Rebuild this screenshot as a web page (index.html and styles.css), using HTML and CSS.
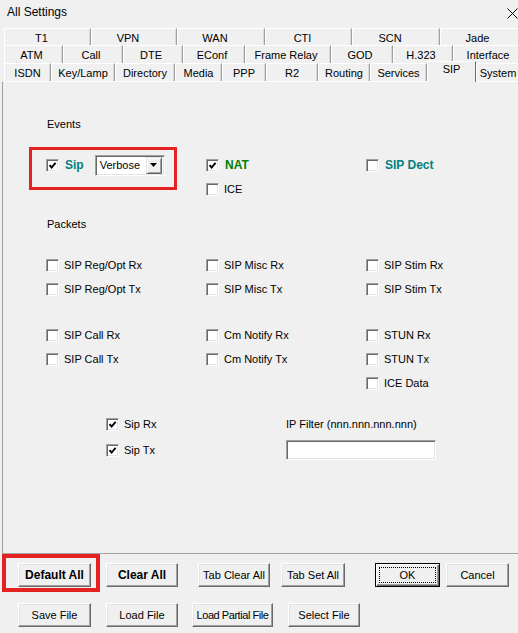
FILE: index.html
```html
<!DOCTYPE html>
<html lang="en">
<head>
    <meta charset="UTF-8">
    <meta name="viewport" content="width=device-width, initial-scale=1.0">
    <title>All Settings</title>
    <link rel="stylesheet" href="styles.css">
</head>
<body>
    <div class="window">

        <div class="titlebar">
            <span class="title">All Settings</span>
            <svg class="close" width="11" height="11" viewBox="0 0 11 11">
                <path d="M0.5 0.5 L10.5 10.5 M10.5 0.5 L0.5 10.5" stroke="#000" stroke-width="1" fill="none"/>
            </svg>
        </div>

        <div class="tabstrip">
            <div class="tabrow row1">
                <div class="tab">T1</div>
                <div class="tab">VPN</div>
                <div class="tab">WAN</div>
                <div class="tab">CTI</div>
                <div class="tab">SCN</div>
                <div class="tab">Jade</div>
            </div>
            <div class="tabrow row2">
                <div class="tab">ATM</div>
                <div class="tab">Call</div>
                <div class="tab">DTE</div>
                <div class="tab">EConf</div>
                <div class="tab">Frame Relay</div>
                <div class="tab">GOD</div>
                <div class="tab">H.323</div>
                <div class="tab">Interface</div>
            </div>
            <div class="tabrow row3">
                <div class="tab">ISDN</div>
                <div class="tab">Key/Lamp</div>
                <div class="tab">Directory</div>
                <div class="tab">Media</div>
                <div class="tab">PPP</div>
                <div class="tab">R2</div>
                <div class="tab">Routing</div>
                <div class="tab">Services</div>
                <div class="tab selected">SIP</div>
                <div class="tab">System</div>
            </div>
        </div>

        <div class="panel">

            <p class="group-title">Events</p>
            <div class="grid events">
                <div class="item">
                    <span class="check on"><svg viewBox="0 0 9 9"><path d="M1.5 4.2 L3.6 6.5 L7.6 1.8" /></svg></span>
                    <span class="strong teal">Sip</span>
                    <div class="combo">
                        <span>Verbose</span>
                        <span class="drop"><svg width="7" height="4" viewBox="0 0 7 4"><path d="M0 0 H7 L3.5 4 Z" fill="#000"/></svg></span>
                    </div>
                </div>
                <div class="item">
                    <span class="check on"><svg viewBox="0 0 9 9"><path d="M1.5 4.2 L3.6 6.5 L7.6 1.8" /></svg></span>
                    <span class="strong green">NAT</span>
                </div>
                <div class="item">
                    <span class="check"></span>
                    <span class="strong teal">SIP Dect</span>
                </div>
                <div class="item col2">
                    <span class="check"></span>
                    <span>ICE</span>
                </div>
            </div>

            <p class="group-title">Packets</p>
            <div class="grid packets">
                <div class="item"><span class="check"></span><span>SIP Reg/Opt Rx</span></div>
                <div class="item"><span class="check"></span><span>SIP Misc Rx</span></div>
                <div class="item"><span class="check"></span><span>SIP Stim Rx</span></div>
                <div class="item"><span class="check"></span><span>SIP Reg/Opt Tx</span></div>
                <div class="item"><span class="check"></span><span>SIP Misc Tx</span></div>
                <div class="item"><span class="check"></span><span>SIP Stim Tx</span></div>
            </div>

            <div class="grid packets">
                <div class="item"><span class="check"></span><span>SIP Call Rx</span></div>
                <div class="item"><span class="check"></span><span>Cm Notify Rx</span></div>
                <div class="item"><span class="check"></span><span>STUN Rx</span></div>
                <div class="item"><span class="check"></span><span>SIP Call Tx</span></div>
                <div class="item"><span class="check"></span><span>Cm Notify Tx</span></div>
                <div class="item"><span class="check"></span><span>STUN Tx</span></div>
                <div class="item col3"><span class="check"></span><span>ICE Data</span></div>
            </div>

            <div class="grid filters">
                <div class="item">
                    <span class="check on"><svg viewBox="0 0 9 9"><path d="M1.5 4.2 L3.6 6.5 L7.6 1.8" /></svg></span>
                    <span>Sip Rx</span>
                </div>
                <div class="item">IP Filter (nnn.nnn.nnn.nnn)</div>
                <div class="item">
                    <span class="check on"><svg viewBox="0 0 9 9"><path d="M1.5 4.2 L3.6 6.5 L7.6 1.8" /></svg></span>
                    <span>Sip Tx</span>
                </div>
                <div class="item"><span class="textbox"></span></div>
            </div>

        </div>

        <div class="actions">
            <div class="btnrow">
                <button class="btn bold w73">Default All</button>
                <button class="btn bold w72 ml15">Clear All</button>
                <button class="btn w72 ml20">Tab Clear All</button>
                <button class="btn w64 ml11">Tab Set All</button>
                <button class="btn default w65 ml30"><span class="focus">OK</span></button>
                <button class="btn w63 ml6">Cancel</button>
            </div>
            <div class="btnrow">
                <button class="btn w73">Save File</button>
                <button class="btn w72 ml15">Load File</button>
                <button class="btn tight w81 ml14">Load Partial File</button>
                <button class="btn w72 ml15">Select File</button>
            </div>
        </div>

        <!-- red highlight frames drawn over the dialog -->
        <div class="mark mark-sip"></div>
        <div class="mark mark-default"></div>

    </div>
</body>
</html>
```

FILE: styles.css
```css
* {
    box-sizing: border-box;
    margin: 0;
    padding: 0;
}

html, body {
    width: 518px;
    height: 633px;
    overflow: hidden;
    background-color: #f0f0f0;
}

body {
    font-family: "Liberation Sans", Arial, sans-serif;
    font-size: 11px;
    color: #000;
}

.window {
    position: relative;
    width: 530px;
    height: 633px;
}

/* title bar */
.titlebar {
    width: 518px;
    height: 28px;
    display: flex;
    justify-content: space-between;
    align-items: center;
    padding-left: 7px;
    padding-bottom: 4px;
}

.title {
    font-size: 12px;
}

.close {
    display: block;
    margin-top: 2px;
}

/* tab headers, three rows */
.tabstrip {
    padding-left: 4px;
    position: relative;
    z-index: 1;
}

.tabrow {
    display: grid;
    width: 523px;
}

.row1 {
    height: 17px;
    grid-template-columns: 87px 86px 88px 87px 88px 87px;
}

.row1 .tab {
    padding-right: 12px;
}

.row2 {
    height: 18px;
    grid-template-columns: 59px 60px 60px 62px 86px 62px 60px 74px;
}

.row2 .tab {
    padding-right: 4px;
}

.row3 {
    height: 18px;
    grid-template-columns: 47px 64px 60px 47px 44px 52px 52px 57px 49px 44px;
}

.tab {
    display: flex;
    align-items: center;
    justify-content: center;
    background-color: #f0f0f0;
    border-top: 1px solid #fff;
    border-left: 1px solid #fff;
    border-right: 1px solid #a0a0a0;
    box-shadow: inset -1px 0 0 #d8d8d8;
    white-space: nowrap;
    padding-top: 1px;
}

.tab.selected {
    margin-top: -2px;
    margin-bottom: -1px;
    align-items: flex-start;
    padding-top: 1px;
    border-right: 1px solid #696969;
    box-shadow: none;
}

/* property page */
.panel {
    margin-left: 2px;
    height: 473px;
    border-top: 1px solid #fff;
    border-left: 1px solid #a0a0a0;
    border-bottom: 1px solid #a0a0a0;
    padding-top: 35px;
    padding-left: 43px;
}

.group-title {
    height: 14px;
    line-height: 14px;
    padding-left: 1px;
}

.grid {
    display: grid;
    grid-template-columns: 160px 160px 1fr;
    grid-auto-rows: 24px;
}

.events {
    margin-top: 22px;
}

.events + .group-title {
    margin-top: 16px;
}

.packets {
    margin-top: 22px;
}

.filters {
    margin-top: 17px;
    margin-left: 60px;
    grid-template-columns: 180px 1fr;
    row-gap: 2px;
}

.col2 {
    grid-column: 2;
}

.col3 {
    grid-column: 3;
}

.item {
    display: flex;
    align-items: center;
    gap: 5px;
    white-space: nowrap;
}

.strong {
    font-weight: bold;
    font-size: 12px;
    margin-left: 1px;
}

.teal {
    color: #008080;
}

.green {
    color: #008000;
}

/* sunken 3d checkbox */
.check {
    display: block;
    flex: none;
    width: 13px;
    height: 13px;
    background-color: #fff;
    border-top: 1px solid #a0a0a0;
    border-left: 1px solid #a0a0a0;
    border-bottom: 1px solid #fff;
    border-right: 1px solid #fff;
    box-shadow: inset 1px 1px 0 #696969, inset -1px -1px 0 #e3e3e3;
    padding: 1px 0 0 1px;
}

.check svg {
    display: block;
    width: 9px;
    height: 9px;
}

.check svg path {
    fill: none;
    stroke: #000;
    stroke-width: 1.9;
}

/* drop-down list */
.combo {
    display: flex;
    align-items: center;
    justify-content: space-between;
    margin-left: 6px;
    width: 70px;
    height: 21px;
    background-color: #fff;
    border-top: 1px solid #a0a0a0;
    border-left: 1px solid #a0a0a0;
    border-bottom: 1px solid #fff;
    border-right: 1px solid #fff;
    box-shadow: inset 1px 1px 0 #696969, inset -1px -1px 0 #e3e3e3;
    padding: 2px 2px 2px 4px;
    font-size: 11px;
}

.drop {
    display: flex;
    align-items: center;
    justify-content: center;
    width: 16px;
    height: 17px;
    background-color: #f0f0f0;
    border-top: 1px solid #e3e3e3;
    border-left: 1px solid #e3e3e3;
    border-bottom: 1px solid #696969;
    border-right: 1px solid #696969;
    box-shadow: inset 1px 1px 0 #fff, inset -1px -1px 0 #a0a0a0;
}

.textbox {
    display: block;
    width: 150px;
    height: 20px;
    background-color: #fff;
    border-top: 1px solid #a0a0a0;
    border-left: 1px solid #a0a0a0;
    border-bottom: 1px solid #fff;
    border-right: 1px solid #fff;
    box-shadow: inset 1px 1px 0 #696969, inset -1px -1px 0 #e3e3e3;
}

/* command buttons */
.actions {
    padding-top: 9px;
    padding-left: 18px;
    display: flex;
    flex-direction: column;
    gap: 16px;
}

.btnrow {
    display: flex;
}

.btn {
    display: flex;
    align-items: center;
    justify-content: center;
    height: 24px;
    font-family: "Liberation Sans", Arial, sans-serif;
    font-size: 11px;
    color: #000;
    background-color: #f0f0f0;
    border-top: 1px solid #fff;
    border-left: 1px solid #fff;
    border-bottom: 1px solid #696969;
    border-right: 1px solid #696969;
    box-shadow: inset -1px -1px 0 #a0a0a0, inset 1px 1px 0 #e3e3e3;
    white-space: nowrap;
}

.btn.bold {
    font-weight: bold;
    font-size: 12px;
}

.btn.tight {
    letter-spacing: -0.45px;
}

.btn.default {
    border: 1px solid #000;
    box-shadow: inset 1px 1px 0 #fff, inset -1px -1px 0 #696969, inset -2px -2px 0 #a0a0a0;
    padding: 3px;
}

.focus {
    display: flex;
    align-items: center;
    justify-content: center;
    width: 100%;
    height: 100%;
    border: 1px dotted #000;
}

.w63 { width: 63px; }
.w64 { width: 64px; }
.w65 { width: 65px; }
.w72 { width: 72px; }
.w73 { width: 73px; }
.w81 { width: 81px; }

.ml6 { margin-left: 6px; }
.ml11 { margin-left: 11px; }
.ml14 { margin-left: 14px; }
.ml15 { margin-left: 15px; }
.ml20 { margin-left: 20px; }
.ml30 { margin-left: 30px; }

/* red highlight frames */
.mark {
    position: absolute;
    border: 3px solid #e52222;
    z-index: 2;
}

.mark-sip {
    left: 29px;
    top: 147px;
    width: 148px;
    height: 43px;
}

.mark-default {
    left: 2px;
    top: 554px;
    width: 98px;
    height: 38px;
    border-width: 4px;
}
```
